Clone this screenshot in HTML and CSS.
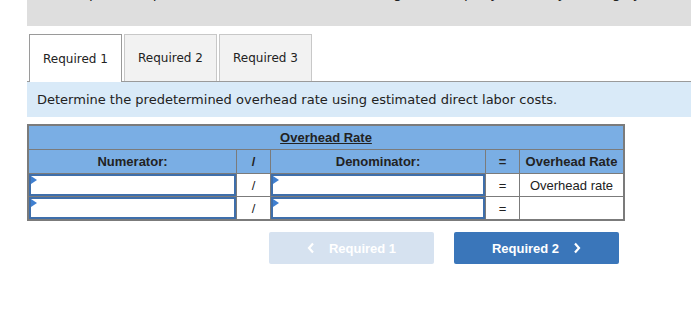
FILE: index.html
```html
<!DOCTYPE html>
<html lang="en">
<head>
    <meta charset="UTF-8">
    <title>Overhead rate</title>
    <link rel="stylesheet" href="styles.css">
</head>
<body>

    <div class="question-band">
        <p class="question-text">Compute the predetermined overhead rate using the company's activity costing system.</p>
    </div>

    <div class="tabs">
        <div class="tab active">Required 1</div>
        <div class="tab">Required 2</div>
        <div class="tab">Required 3</div>
    </div>

    <div class="instructions">Determine the predetermined overhead rate using estimated direct labor costs.</div>

    <table class="rate-table">
        <tr>
            <th colspan="5" class="title"><u>Overhead Rate</u></th>
        </tr>
        <tr>
            <th class="col-num">Numerator:</th>
            <th class="col-op">/</th>
            <th class="col-den">Denominator:</th>
            <th class="col-op">=</th>
            <th class="col-res">Overhead Rate</th>
        </tr>
        <tr>
            <td class="entry"><div class="input"></div></td>
            <td class="op">/</td>
            <td class="entry"><div class="input"></div></td>
            <td class="op">=</td>
            <td class="result">Overhead rate</td>
        </tr>
        <tr>
            <td class="entry"><div class="input"></div></td>
            <td class="op">/</td>
            <td class="entry"><div class="input"></div></td>
            <td class="op">=</td>
            <td class="result"></td>
        </tr>
    </table>

    <div class="nav">
        <button class="nav-btn prev">
            <svg width="8" height="12" viewBox="0 0 8 12"><path d="M6 1.5 L2 6 L6 10.5" fill="none" stroke="#fff" stroke-width="2.2"/></svg>
            Required 1
        </button>
        <button class="nav-btn next">
            Required 2
            <svg width="8" height="12" viewBox="0 0 8 12"><path d="M2 1.5 L6 6 L2 10.5" fill="none" stroke="#fff" stroke-width="2.2"/></svg>
        </button>
    </div>

</body>
</html>
```

FILE: styles.css
```css
body {
    margin: 0;
    font-family: "DejaVu Sans", Verdana, sans-serif;
    background-color: #ffffff;
    color: #222222;
}
.question-band {
    margin-left: 27px;
    height: 26px;
    background-color: #dedede;
    overflow: hidden;
}
.question-text {
    margin: -18px 0 0 30px;
    font-size: 14px;
    line-height: 22px;
    white-space: nowrap;
}
.tabs {
    display: flex;
    gap: 2px;
    margin: 8px 0 0 27px;
    padding-left: 2px;
    border-bottom: 1px solid #9a9a9a;
}
.tab {
    width: 91px;
    height: 46px;
    margin-bottom: -1px;
    display: flex;
    align-items: center;
    justify-content: center;
    font-size: 12px;
    color: #222222;
    background-color: #f2f2f2;
    border: 1px solid #c8c8c8;
    border-bottom: none;
}
.tab.active {
    background-color: #ffffff;
    border-color: #9a9a9a;
    height: 47px;
}
.instructions {
    margin-left: 27px;
    height: 35px;
    padding-left: 10px;
    display: flex;
    align-items: center;
    background-color: #d9eaf8;
    font-size: 13px;
    color: #222222;
}
.rate-table {
    margin: 7px 0 0 27px;
    width: 598px;
    border-collapse: collapse;
    border: 2px solid #7b7b7b;
    font-family: "Liberation Sans", Arial, sans-serif;
    font-size: 13px;
}
.rate-table th {
    height: 23px;
    padding: 0;
    background-color: #7aaee4;
    border: 1px solid #7b7b7b;
    font-weight: bold;
    color: #222222;
}
.rate-table td {
    height: 22px;
    padding: 0;
    border: 1px solid #7b7b7b;
    text-align: center;
    color: #222222;
}
.col-num {
    width: 207px;
}
.col-op {
    width: 33px;
    font-weight: normal;
}
.col-den {
    width: 214px;
}
.rate-table td.entry {
    vertical-align: top;
}
.input {
    position: relative;
    height: 18px;
    border: 2px solid #3f6fab;
    background-color: #ffffff;
}
.input::before {
    content: "";
    position: absolute;
    left: 0;
    top: 0;
    border-top: 4px solid transparent;
    border-bottom: 4px solid transparent;
    border-left: 6px solid #3f7fd0;
}
.nav {
    display: flex;
    gap: 20px;
    margin: 11px 0 0 269px;
}
.nav-btn {
    width: 165px;
    height: 32px;
    display: flex;
    align-items: center;
    justify-content: center;
    gap: 14px;
    border: none;
    border-radius: 2px;
    color: #ffffff;
    font-family: "Liberation Sans", Arial, sans-serif;
    font-size: 13px;
    font-weight: bold;
}
.nav-btn.prev {
    background-color: #d6e2f0;
}
.nav-btn.next {
    background-color: #3a76ba;
}
```
